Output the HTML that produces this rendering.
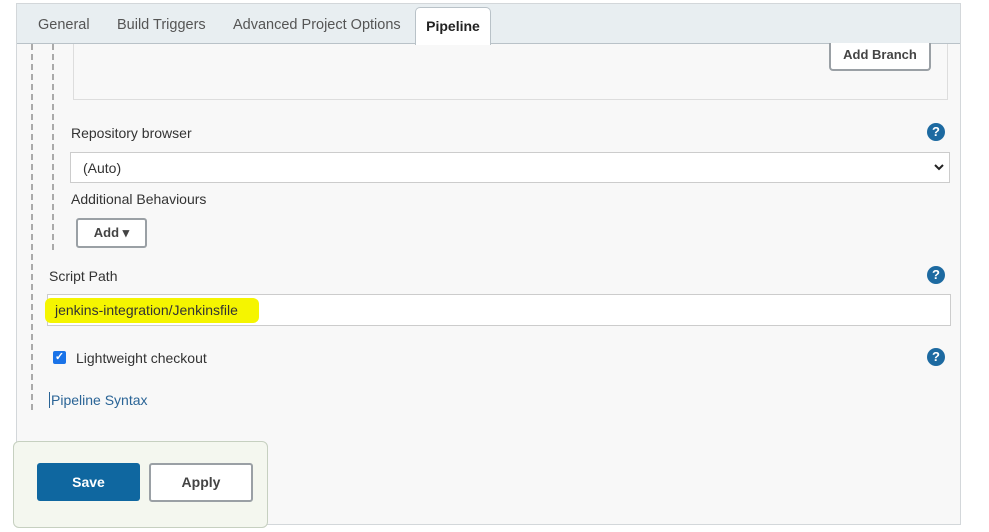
<!DOCTYPE html>
<html><head><style>
body{margin:0;width:989px;height:532px;background:#fff;font-family:"Liberation Sans",sans-serif;position:relative;overflow:hidden;color:#333}
.a{position:absolute}
.panel{left:16px;top:3px;width:943px;height:520px;background:#f8f8f8;border:1px solid #d3d7da}
.tabs{left:17px;top:4px;width:943px;height:39px;background:#e8eef1;border-bottom:1px solid #b9c2c8}
.tab{top:17px;font-size:14.5px;color:#555}
.ptab{left:415px;top:7px;width:74px;height:37px;background:#fff;border:1px solid #b9c2c8;border-bottom:none;border-radius:5px 5px 0 0;font-weight:bold;font-size:14px;text-align:center;line-height:36px;color:#222}
.dash{width:0;border-left:2px dashed #aaa}
.lbl{font-size:14px;color:#333}
.help{width:18px;height:18px;border-radius:50%;background:#1d6aa1;color:#fff;font-weight:bold;font-size:13px;text-align:center;line-height:18px}
.btn{background:#fff;border:2px solid #9aa0a5;border-radius:3px;font-weight:bold;font-size:13px;color:#444;text-align:center;box-sizing:border-box}
</style></head><body>
<div class="a panel"></div>
<div class="a tabs"></div>
<div class="a tab" style="left:38px">General</div>
<div class="a tab" style="left:117px">Build Triggers</div>
<div class="a tab" style="left:233px">Advanced Project Options</div>
<div class="a ptab">Pipeline</div>
<div class="a dash" style="left:31px;top:44px;height:366px"></div>
<div class="a dash" style="left:52px;top:44px;height:206px"></div>
<div class="a" style="left:73px;top:44px;width:873px;height:55px;border-left:1px solid #ddd;border-right:1px solid #ddd;border-bottom:1px solid #ddd"></div>
<div class="a btn" style="left:829px;top:43px;width:102px;height:28px;line-height:24px;border-top:none;border-radius:0 0 4px 4px">Add Branch</div>
<div class="a lbl" style="left:71px;top:125px">Repository browser</div>
<div class="a help" style="left:927px;top:123px">?</div>
<div class="a" style="left:70px;top:152px;width:878px;height:29px;background:#fff;border:1px solid #ccc;font-size:14px;line-height:30px;text-indent:12px">(Auto)<svg style="position:absolute;right:5px;top:10px" width="10" height="8" viewBox="0 0 10 8"><path d="M1 2 L5 6 L9 2" stroke="#222" stroke-width="2" fill="none"/></svg></div>
<div class="a lbl" style="left:71px;top:191px">Additional Behaviours</div>
<div class="a btn" style="left:76px;top:218px;width:71px;height:30px;line-height:26px">Add ▾</div>
<div class="a lbl" style="left:49px;top:268px">Script Path</div>
<div class="a help" style="left:927px;top:266px">?</div>
<div class="a" style="left:47px;top:294px;width:902px;height:30px;background:#fff;border:1px solid #ccc"></div>
<div class="a" style="left:45px;top:298px;width:214px;height:25px;background:#f5f500;border-radius:6px"></div>
<div class="a" style="left:55px;top:302px;font-size:14px;color:#333">jenkins-integration/Jenkinsfile</div>
<div class="a" style="left:53px;top:351px;width:13px;height:13px;background:#1a73e8;border-radius:2px;color:#fff;font-size:11px;line-height:13px;text-align:center;font-weight:bold">✓</div>
<div class="a lbl" style="left:76px;top:350px">Lightweight checkout</div>
<div class="a help" style="left:927px;top:348px">?</div>
<div class="a" style="left:49px;top:392px;font-size:14px;color:#2a6496;border-left:1px solid #2a6496;padding-left:1px">Pipeline Syntax</div>
<div class="a" style="left:13px;top:441px;width:253px;height:85px;background:#f4f7ef;border:1px solid #c6d0c0;border-radius:6px"></div>
<div class="a" style="left:37px;top:463px;width:103px;height:38px;background:#0f67a0;border-radius:3px;color:#fff;font-weight:bold;font-size:14px;text-align:center;line-height:38px">Save</div>
<div class="a btn" style="left:149px;top:463px;width:104px;height:39px;line-height:35px;font-size:14px">Apply</div>
</body></html>
